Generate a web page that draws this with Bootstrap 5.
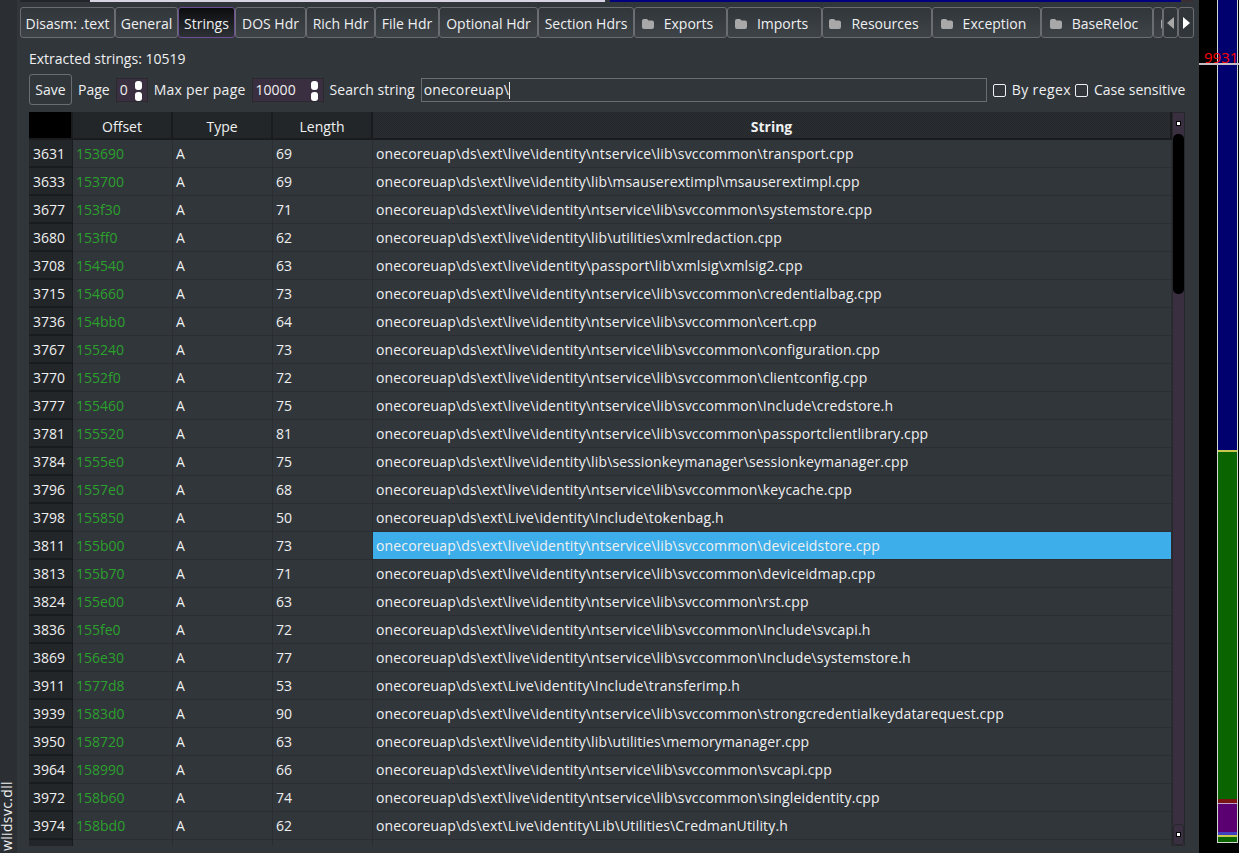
<!DOCTYPE html>
<html lang="en">
<head>
  <meta charset="UTF-8" />
  <title>Strings</title>
  <link href="https://cdn.jsdelivr.net/npm/bootstrap@5.3.0/dist/css/bootstrap.min.css" rel="stylesheet">
  <style>
    html, body { height: 853px; overflow: hidden; }
    body { background: #000; font: 14px/20px "Open Sans", sans-serif; color: #eff0f1; }
    .side-strip { width: 17px; background: #2b2f33; }
    .side-label { writing-mode: vertical-rl; transform: rotate(180deg); width: 14px; line-height: 14px; letter-spacing: .35px; padding-top: 2px; margin-right: 3px; font-size: 14px; color: #eff0f1; }
    .main-panel { width: 1182px; background: #31363b; }
    .top-bar { height: 7px; }
    .top-bar i { display: block; height: 2px; }
    .top-a { width: 70px; margin-left: 3px; background: #23262a; }
    .top-b { width: 515px; background: #d9d4e4; }
    .top-c { width: 571px; margin-left: 5px; background: #00007f; }
    .top-d { width: 12px; background: #3a3034; }
    .tab-row { height: 31px; margin-left: 3px; }
    .tab-btn { height: 31px; border: 1px solid #6a6e72; border-radius: 3px; background: linear-gradient(#31363b, #3e4348); text-align: center; line-height: 32px; white-space: nowrap; overflow: hidden; flex: none; }
    .tab-on { background: linear-gradient(#0b0c0e, #2d3136); border-color: #6e4f96; }
    .tab-dir { padding-right: 6px; }
    .tab-btn svg { vertical-align: 0; margin-right: 10px; }
    .tab-cut { width: 10px; padding-left: 7px; text-align: left; }
    .tab-arrow { background: #31363b; }
    .panel-body { padding-left: 12px; }
    .count-line { height: 20px; margin-top: 11px; margin-bottom: 5px; }
    .tool-row { height: 32px; margin-bottom: 6px; }
    .save-btn { width: 43px; height: 31px; align-self: flex-start; border: 1px solid #6a6e72; border-radius: 3px; line-height: 29px; text-align: center; margin-right: 6px; }
    .spin-box { height: 24px; background: #3a2f40; border: 1px solid #2b2830; position: relative; padding-left: 3px; line-height: 22px; margin: 0 6px; }
    .spin-arrows { position: absolute; right: 5px; top: 1px; }
    .spin-arrows i { display: block; width: 7px; height: 9px; margin: 1px 0 2px; background: #fff; border-radius: 3px; }
    .search-box { width: 566px; height: 24px; border: 1px solid #6a6e72; line-height: 22px; padding-left: 2px; margin: 0 6px; letter-spacing: .15px; }
    .caret-mark { display: inline-block; width: 1px; height: 17px; background: #eff0f1; vertical-align: -4px; }
    .tick-box { display: inline-block; width: 13px; height: 13px; border: 1px solid #eff0f1; border-radius: 2px; margin-right: 6px; vertical-align: -2px; }
    .wide-label { letter-spacing: .25px; }
    .wide-tick { letter-spacing: .4px; }
    .grid-wrap { width: 1156px; }
    .str-table { table-layout: fixed; width: 1143px; margin: 0; border-collapse: separate; border-spacing: 0; color: #eff0f1; --bs-table-bg: transparent; --bs-table-color: #eff0f1; }
    .str-table th, .str-table td { padding: 0 3px; height: 28px; line-height: 27px; vertical-align: top; white-space: nowrap; font-weight: 400; border: 0; border-right: 1px solid #2a2e32; border-bottom: 1px solid #2a2e32; box-shadow: none; overflow: hidden; }
    .str-table thead th { background: #232629; text-align: center; padding-top: 3px; line-height: 23px; border-right: 2px solid #191b1e; border-bottom: 2px solid #191b1e; }
    .str-table thead th.corner { background: #000; }
    .str-table thead th.sorted { font-weight: 700; background: repeating-conic-gradient(#232629 0 25%, #2c2f33 0 50%) 0 0 / 2px 2px; }
    .str-table tbody th { background: #232629; padding: 2px 0 0 4px; line-height: 24px; border-right: 1px solid #191b1e; border-bottom: 2px solid #191b1e; }
    .str-table tbody td:last-child { letter-spacing: .14px; }
    .str-table td.off { color: #2ca02c; letter-spacing: 0; }
    .str-table tr.sel td.hit { background: #3daee9; }
    .cut-row th, .cut-row td { height: 6px !important; padding: 0 !important; border-bottom: 0 !important; }
    .scroll-col { width: 13px; background: #3a2f40; border: 1px solid #26282c; height: 734px; }
    .scroll-end { height: 21px; flex: none; display: flex; align-items: center; justify-content: center; border-radius: 3px; }
    .scroll-low { border: 1px solid #26282c; }
    .scroll-end i { width: 3px; height: 3px; background: #fff; box-shadow: 0 0 0 1px #000; }
    .scroll-thumb { height: 160px; background: #000; border-radius: 5px; }
    .right-col { width: 40px; padding-left: 18px; position: relative; }
    .map-bar { width: 21px; height: 843px; border-left: 1px solid #d0d8d0; border-right: 1px solid #d0d8d0; border-bottom: 1px solid #d0d8d0; display: flex; flex-direction: column; }
    .map-bar i { display: block; flex: none; }
    .map-line { position: absolute; left: 0; right: 0; top: 63px; height: 2px; background: #c4bcc4; }
    .map-num { position: absolute; left: 5px; top: 47px; width: 35px; overflow: hidden; color: #f00; font-size: 15px; line-height: 20px; }
  </style>
</head>
<body class="d-flex m-0">
  <svg width="0" height="0" class="position-absolute"><symbol id="dir-ico" viewBox="0 0 12 10"><path fill="#a8a8a8" d="M2 0h3l1.500 1.500H10a2 2 0 0 1 2 2V8a2 2 0 0 1-2 2H2a2 2 0 0 1-2-2V2a2 2 0 0 1 2-2z"/></symbol></svg>
  <div class="side-strip d-flex flex-column justify-content-end">
    <div class="side-label">wlidsvc.dll</div>
  </div>

  <div class="main-panel">
    <div class="top-bar d-flex"><i class="top-a"></i><i class="top-b"></i><i class="top-c"></i><i class="top-d"></i></div>
    <div class="tab-row d-flex">
      <div class="tab-btn" style="width:95px">Disasm: .text</div>
      <div class="tab-btn" style="width:63px">General</div>
      <div class="tab-btn tab-on" style="width:57px">Strings</div>
      <div class="tab-btn" style="width:71px">DOS Hdr</div>
      <div class="tab-btn" style="width:69px">Rich Hdr</div>
      <div class="tab-btn" style="width:64px">File Hdr</div>
      <div class="tab-btn" style="width:99px">Optional Hdr</div>
      <div class="tab-btn" style="width:96px">Section Hdrs</div>
      <div class="tab-btn tab-dir" style="width:93px"><svg width="12" height="10"><use href="#dir-ico"/></svg>Exports</div>
      <div class="tab-btn tab-dir" style="width:95px"><svg width="12" height="10"><use href="#dir-ico"/></svg>Imports</div>
      <div class="tab-btn tab-dir" style="width:110px"><svg width="12" height="10"><use href="#dir-ico"/></svg>Resources</div>
      <div class="tab-btn tab-dir" style="width:109px"><svg width="12" height="10"><use href="#dir-ico"/></svg>Exception</div>
      <div class="tab-btn tab-dir" style="width:112px"><svg width="12" height="10"><use href="#dir-ico"/></svg>BaseReloc</div>
      <div class="tab-btn tab-cut"><svg width="12" height="10"><use href="#dir-ico"/></svg></div>
      <div class="tab-btn tab-arrow" style="width:15px"><svg class="m-0" width="7" height="12" viewBox="0 0 7 12"><path fill="#a8a8a8" d="M7 0v12L0 6z"/></svg></div>
      <div class="tab-btn tab-arrow" style="width:16px"><svg class="m-0" width="7" height="12" viewBox="0 0 7 12"><path fill="#fff" d="M0 0v12l7-6z"/></svg></div>
    </div>

    <div class="panel-body">
      <div class="count-line">Extracted strings: 10519</div>
      <div class="tool-row d-flex align-items-center">
        <div class="save-btn">Save</div>
        <span>Page</span>
        <div class="spin-box" style="width:32px">0<span class="spin-arrows"><i></i><i></i></span></div>
        <span class="wide-label">Max per page</span>
        <div class="spin-box" style="width:72px">10000<span class="spin-arrows"><i></i><i></i></span></div>
        <span>Search string</span>
        <div class="search-box">onecoreuap\<span class="caret-mark"></span></div>
        <span class="wide-tick me-1"><span class="tick-box"></span>By regex</span>
        <span><span class="tick-box"></span>Case sensitive</span>
      </div>
      <div class="grid-wrap d-flex">
        <table class="table str-table">
          <colgroup><col style="width:44px"><col style="width:100px"><col style="width:100px"><col style="width:100px"><col></colgroup>
          <thead><tr><th class="corner"></th><th>Offset</th><th>Type</th><th>Length</th><th class="sorted">String</th></tr></thead>
          <tbody>
            <tr><th>3631</th><td class="off">153690</td><td>A</td><td>69</td><td>onecoreuap\ds\ext\live\identity\ntservice\lib\svccommon\transport.cpp</td></tr>
            <tr><th>3633</th><td class="off">153700</td><td>A</td><td>69</td><td>onecoreuap\ds\ext\live\identity\lib\msauserextimpl\msauserextimpl.cpp</td></tr>
            <tr><th>3677</th><td class="off">153f30</td><td>A</td><td>71</td><td>onecoreuap\ds\ext\live\identity\ntservice\lib\svccommon\systemstore.cpp</td></tr>
            <tr><th>3680</th><td class="off">153ff0</td><td>A</td><td>62</td><td>onecoreuap\ds\ext\live\identity\lib\utilities\xmlredaction.cpp</td></tr>
            <tr><th>3708</th><td class="off">154540</td><td>A</td><td>63</td><td>onecoreuap\ds\ext\live\identity\passport\lib\xmlsig\xmlsig2.cpp</td></tr>
            <tr><th>3715</th><td class="off">154660</td><td>A</td><td>73</td><td>onecoreuap\ds\ext\live\identity\ntservice\lib\svccommon\credentialbag.cpp</td></tr>
            <tr><th>3736</th><td class="off">154bb0</td><td>A</td><td>64</td><td>onecoreuap\ds\ext\live\identity\ntservice\lib\svccommon\cert.cpp</td></tr>
            <tr><th>3767</th><td class="off">155240</td><td>A</td><td>73</td><td>onecoreuap\ds\ext\live\identity\ntservice\lib\svccommon\configuration.cpp</td></tr>
            <tr><th>3770</th><td class="off">1552f0</td><td>A</td><td>72</td><td>onecoreuap\ds\ext\live\identity\ntservice\lib\svccommon\clientconfig.cpp</td></tr>
            <tr><th>3777</th><td class="off">155460</td><td>A</td><td>75</td><td>onecoreuap\ds\ext\live\identity\ntservice\lib\svccommon\Include\credstore.h</td></tr>
            <tr><th>3781</th><td class="off">155520</td><td>A</td><td>81</td><td>onecoreuap\ds\ext\live\identity\ntservice\lib\svccommon\passportclientlibrary.cpp</td></tr>
            <tr><th>3784</th><td class="off">1555e0</td><td>A</td><td>75</td><td>onecoreuap\ds\ext\live\identity\lib\sessionkeymanager\sessionkeymanager.cpp</td></tr>
            <tr><th>3796</th><td class="off">1557e0</td><td>A</td><td>68</td><td>onecoreuap\ds\ext\live\identity\ntservice\lib\svccommon\keycache.cpp</td></tr>
            <tr><th>3798</th><td class="off">155850</td><td>A</td><td>50</td><td>onecoreuap\ds\ext\Live\identity\Include\tokenbag.h</td></tr>
            <tr class="sel"><th>3811</th><td class="off">155b00</td><td>A</td><td>73</td><td class="hit">onecoreuap\ds\ext\live\identity\ntservice\lib\svccommon\deviceidstore.cpp</td></tr>
            <tr><th>3813</th><td class="off">155b70</td><td>A</td><td>71</td><td>onecoreuap\ds\ext\live\identity\ntservice\lib\svccommon\deviceidmap.cpp</td></tr>
            <tr><th>3824</th><td class="off">155e00</td><td>A</td><td>63</td><td>onecoreuap\ds\ext\live\identity\ntservice\lib\svccommon\rst.cpp</td></tr>
            <tr><th>3836</th><td class="off">155fe0</td><td>A</td><td>72</td><td>onecoreuap\ds\ext\live\identity\ntservice\lib\svccommon\Include\svcapi.h</td></tr>
            <tr><th>3869</th><td class="off">156e30</td><td>A</td><td>77</td><td>onecoreuap\ds\ext\live\identity\ntservice\lib\svccommon\Include\systemstore.h</td></tr>
            <tr><th>3911</th><td class="off">1577d8</td><td>A</td><td>53</td><td>onecoreuap\ds\ext\Live\identity\Include\transferimp.h</td></tr>
            <tr><th>3939</th><td class="off">1583d0</td><td>A</td><td>90</td><td>onecoreuap\ds\ext\live\identity\ntservice\lib\svccommon\strongcredentialkeydatarequest.cpp</td></tr>
            <tr><th>3950</th><td class="off">158720</td><td>A</td><td>63</td><td>onecoreuap\ds\ext\live\identity\lib\utilities\memorymanager.cpp</td></tr>
            <tr><th>3964</th><td class="off">158990</td><td>A</td><td>66</td><td>onecoreuap\ds\ext\live\identity\ntservice\lib\svccommon\svcapi.cpp</td></tr>
            <tr><th>3972</th><td class="off">158b60</td><td>A</td><td>74</td><td>onecoreuap\ds\ext\live\identity\ntservice\lib\svccommon\singleidentity.cpp</td></tr>
            <tr><th>3974</th><td class="off">158bd0</td><td>A</td><td>62</td><td>onecoreuap\ds\ext\Live\identity\Lib\Utilities\CredmanUtility.h</td></tr>
            <tr class="cut-row"><th></th><td></td><td></td><td></td><td></td></tr>
          </tbody>
        </table>
        <div class="scroll-col ms-auto d-flex flex-column">
          <div class="scroll-end"><i></i></div>
          <div class="scroll-thumb"></div>
          <div class="scroll-end scroll-low mt-auto"><i></i></div>
        </div>
      </div>
    </div>
  </div>

  <div class="right-col">
    <div class="map-bar">
      <i style="height:450px;background:#00006e"></i>
      <i style="height:2px;background:#c8c850"></i>
      <i style="height:347px;background:#0a6400"></i>
      <i style="height:4px;background:#7a1414"></i>
      <i style="height:1px;background:#c0a0c8"></i>
      <i style="height:28px;background:#5a0070"></i>
      <i style="height:3px;background:#4040c0"></i>
      <i style="height:2px;background:#c8c850"></i>
      <i style="height:5px;background:#0a6400"></i>
    </div>
    <div class="map-line"></div>
    <div class="map-num">99310</div>
  </div>
</body>
</html>
